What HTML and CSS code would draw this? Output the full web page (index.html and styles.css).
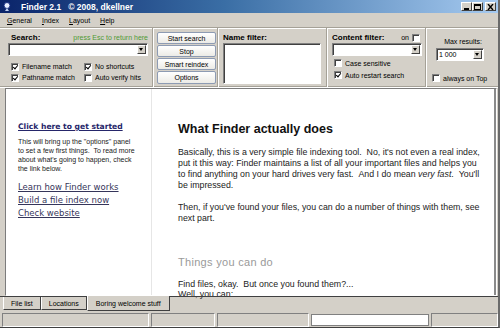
FILE: index.html
```html
<!DOCTYPE html>
<html lang="en">
<head>
    <meta charset="UTF-8">
    <title>Finder 2.1</title>
    <link rel="stylesheet" href="styles.css">
</head>
<body>
    <div class="window">
        <div class="titlebar">
            <svg class="app-icon" width="9" height="10" viewBox="0 0 9 10">
                <circle cx="4" cy="3.5" r="3" fill="#e8f0ff" stroke="#1a2f80" stroke-width="1"/>
                <path d="M2 9 L4 6 L6 9 Z" fill="#c0d0f0"/>
            </svg>
            <span class="title">Finder 2.1 &nbsp; © 2008, dkellner</span>
            <div class="win-buttons">
                <span class="win-btn"><svg width="7" height="6" viewBox="0 0 7 6"><rect x="1" y="4" width="5" height="2" fill="#000"/></svg></span>
                <span class="win-btn"><svg width="7" height="6" viewBox="0 0 7 6"><rect x="0.5" y="0.5" width="6" height="5" fill="none" stroke="#000"/><rect x="0" y="0" width="7" height="2" fill="#000"/></svg></span>
                <span class="win-btn close"><svg width="7" height="6" viewBox="0 0 7 6"><path d="M1 0 L6 6 M6 0 L1 6" stroke="#000" stroke-width="1.4"/></svg></span>
            </div>
        </div>

        <div class="menubar">
            <span><u>G</u>eneral</span>
            <span><u>I</u>ndex</span>
            <span><u>L</u>ayout</span>
            <span><u>H</u>elp</span>
        </div>

        <div class="toolbar">
            <div class="panel search-panel">
                <div class="label-row">
                    <span class="label">Search:</span>
                    <span class="hint">press Esc to return here</span>
                </div>
                <div class="combo search-combo"><span class="combo-text"></span><span class="drop"></span></div>
                <div class="check-grid">
                    <label class="check checked"><span class="box"></span>Filename match</label>
                    <label class="check checked"><span class="box"></span>No shortcuts</label>
                    <label class="check checked"><span class="box"></span>Pathname match</label>
                    <label class="check"><span class="box"></span>Auto verify hits</label>
                </div>
            </div>

            <div class="panel button-panel">
                <button class="btn">Start search</button>
                <button class="btn">Stop</button>
                <button class="btn">Smart reindex</button>
                <button class="btn">Options</button>
            </div>

            <div class="panel name-panel">
                <div class="label-row">
                    <span class="label">Name filter:</span>
                </div>
                <div class="textbox"></div>
            </div>

            <div class="panel content-panel">
                <div class="label-row">
                    <span class="label">Content filter:</span>
                    <label class="check on-check">on<span class="box"></span></label>
                </div>
                <div class="combo content-combo"><span class="combo-text"></span><span class="drop"></span></div>
                <div class="check-list">
                    <label class="check"><span class="box"></span>Case sensitive</label>
                    <label class="check checked"><span class="box"></span>Auto restart search</label>
                </div>
            </div>

            <div class="panel max-panel">
                <div class="max-label">Max results:</div>
                <div class="combo max-combo"><span class="combo-text">1 000</span><span class="drop"></span></div>
                <label class="check top-check"><span class="box"></span>always on Top</label>
            </div>
        </div>

        <div class="viewer">
            <div class="sidebar">
                <a class="start-link">Click here to get started</a>
                <p class="side-text">This will bring up the "options" panel<br>to set a few first things. &nbsp;To read more<br>about what's going to happen, check<br>the link below.</p>
                <div class="side-links">
                    <a>Learn how Finder works</a>
                    <a>Build a file index now</a>
                    <a>Check website</a>
                </div>
            </div>
            <div class="article">
                <h2>What Finder actually does</h2>
                <p>Basically, this is a very simple file indexing tool. &nbsp;No, it's not even a real index,<br>put it this way: Finder maintains a list of all your important files and helps you<br>to find anything on your hard drives very fast. &nbsp;And I do mean <em>very fast</em>. &nbsp;You'll<br>be impressed.</p>
                <p>Then, if you've found your files, you can do a number of things with them, see<br>next part.</p>
                <h3>Things you can do</h3>
                <p class="tight">Find files, okay. &nbsp;But once you found them?...<br>Well, you can:</p>
            </div>
        </div>

        <div class="tabs">
            <span class="tab">File list</span>
            <span class="tab">Locations</span>
            <span class="tab active">Boring welcome stuff</span>
        </div>

        <div class="statusbar">
            <span class="status s1"></span>
            <span class="status s2"></span>
            <span class="status s3"></span>
            <span class="status s4 white"></span>
            <span class="status s5"></span>
        </div>
    </div>
</body>
</html>
```

FILE: styles.css
```css
* {
    box-sizing: border-box;
}
body {
    margin: 0;
    width: 500px;
    height: 328px;
    overflow: hidden;
    background-color: #d4d0c8;
    font-family: 'Liberation Sans', Arial, sans-serif;
    font-size: 7px;
    color: #000;
}
.window {
    width: 500px;
    height: 328px;
    border-right: 2px solid #6a6a6a;
    border-bottom: 1px solid #404040;
    display: flex;
    flex-direction: column;
}

/* title bar */
.titlebar {
    height: 13px;
    flex-shrink: 0;
    display: flex;
    align-items: center;
    padding-left: 3px;
    background: linear-gradient(to right, #0a246a 0%, #3a6ea5 45%, #a6caf0 100%);
}
.app-icon {
    margin-right: 9px;
}
.title {
    color: #fff;
    font-weight: bold;
    font-size: 8.5px;
    white-space: pre;
}
.win-buttons {
    margin-left: auto;
    margin-right: 2px;
    display: flex;
}
.win-btn {
    width: 11px;
    height: 9px;
    background-color: #d4d0c8;
    border: 1px solid;
    border-color: #fff #404040 #404040 #fff;
    display: flex;
    align-items: center;
    justify-content: center;
}
.win-btn.close {
    margin-left: 2px;
}

/* menu */
.menubar {
    height: 14px;
    flex-shrink: 0;
    display: flex;
    align-items: center;
    padding-left: 7px;
}
.menubar span {
    margin-right: 10px;
}

/* toolbar */
.toolbar {
    height: 61px;
    flex-shrink: 0;
    display: flex;
    border-top: 1px solid #a5a197;
    border-bottom: 1px solid #fff;
    box-shadow: inset 0 1px 0 #fff, inset 0 -1px 0 #a5a197;
}
.panel {
    padding-top: 4px;
}
.panel + .panel {
    border-left: 1px solid #a5a197;
    box-shadow: inset 1px 0 0 #fff;
}
.search-panel {
    width: 152px;
    padding-left: 8px;
}
.button-panel {
    width: 65px;
    padding-left: 4px;
    display: flex;
    flex-direction: column;
    gap: 1px;
}
.name-panel {
    width: 109px;
    padding-left: 5px;
}
.content-panel {
    width: 99px;
    padding-left: 5px;
}
.max-panel {
    flex: 1;
    padding-left: 6px;
    padding-top: 10px;
}
.label-row {
    height: 11px;
    display: flex;
    align-items: center;
    justify-content: space-between;
}
.label {
    font-weight: bold;
    font-size: 8px;
}
.search-panel .label {
    margin-left: 3px;
}
.hint {
    color: #4f9a35;
    margin-right: 4px;
}

/* combo boxes and fields */
.combo {
    height: 13px;
    background-color: #fff;
    border: 1px solid;
    border-color: #808080 #fff #fff #808080;
    box-shadow: inset 1px 1px 0 #404040;
    display: flex;
    align-items: center;
    padding: 1px 1px 1px 2px;
}
.combo-text {
    flex: 1;
}
.drop {
    width: 9px;
    height: 9px;
    background-color: #d4d0c8;
    border: 1px solid;
    border-color: #fff #404040 #404040 #fff;
    position: relative;
}
.drop::after {
    content: "";
    position: absolute;
    left: 1px;
    top: 2px;
    border-left: 2.5px solid transparent;
    border-right: 2.5px solid transparent;
    border-top: 3px solid #000;
}
.search-combo {
    width: 140px;
}
.content-combo {
    width: 90px;
}
.max-combo {
    width: 48px;
    margin-left: 4px;
}
.textbox {
    width: 98px;
    height: 41px;
    background-color: #fff;
    border: 1px solid;
    border-color: #808080 #fff #fff #808080;
    box-shadow: inset 1px 1px 0 #404040;
}

/* checkboxes */
.check {
    display: flex;
    align-items: center;
    white-space: nowrap;
}
.box {
    width: 8px;
    height: 8px;
    margin-right: 3px;
    background-color: #fff;
    border: 1px solid;
    border-color: #808080 #fff #fff #808080;
    box-shadow: inset 1px 1px 0 #404040;
    position: relative;
}
.check.checked .box::after {
    content: "";
    position: absolute;
    left: 2px;
    top: 0px;
    width: 2px;
    height: 4px;
    border-right: 1.5px solid #000;
    border-bottom: 1.5px solid #000;
    transform: rotate(40deg);
}
.check-grid {
    margin-top: 5px;
    display: grid;
    grid-template-columns: 73px auto;
    grid-auto-rows: 11px;
    padding-left: 3px;
}
.check-list {
    padding-left: 2px;
    margin-top: 1px;
}
.check-list .check {
    height: 12px;
}
.on-check {
    margin-right: 5px;
}
.on-check .box {
    margin-left: 3px;
    margin-right: 0;
}
.max-label {
    height: 10px;
    text-align: center;
    padding-right: 4px;
}
.top-check {
    margin-top: 12px;
    height: 10px;
}

/* buttons */
.btn {
    width: 59px;
    height: 12px;
    padding: 0;
    font-family: inherit;
    font-size: 7px;
    color: #000;
    background: linear-gradient(#ffffff, #ecebe6);
    border: 1px solid #8d9bb3;
    border-radius: 2px;
}
.btn:last-child {
    height: 13px;
}

/* welcome viewer */
.viewer {
    height: 208px;
    flex-shrink: 0;
    margin-left: 5px;
    margin-right: 1px;
    display: flex;
    background-color: #fff;
    border: 1px solid;
    border-color: #7c7c7c #fff #fff #7c7c7c;
    box-shadow: inset -2px 0 0 #8a8a8a;
}
.sidebar {
    width: 146px;
    border-right: 1px solid #e6e6e6;
    padding: 33px 0 0 12px;
}
.start-link {
    display: block;
    font-family: 'DejaVu Sans', Verdana, sans-serif;
    font-weight: bold;
    font-size: 7.6px;
    line-height: 10px;
    color: #26266a;
    text-decoration: underline;
}
.side-text {
    margin: 5px 0 0;
    line-height: 9px;
    color: #222;
}
.side-links {
    margin-top: 8px;
    display: flex;
    flex-direction: column;
}
.side-links a {
    font-family: 'DejaVu Sans', Verdana, sans-serif;
    font-size: 8.5px;
    line-height: 13px;
    color: #35355a;
    text-decoration: underline;
}
.article {
    flex: 1;
    padding: 33px 0 0 26px;
    color: #222;
}
.article h2 {
    margin: 0;
    font-size: 12.5px;
    line-height: 14px;
    color: #111;
}
.article p {
    margin: 11px 0 0;
    font-size: 8.8px;
    line-height: 11px;
}
.article h3 {
    margin: 32px 0 0;
    font-weight: normal;
    font-size: 11px;
    line-height: 13px;
    color: #9a9a9a;
    letter-spacing: 0.3px;
}
.article p.tight {
    margin-top: 10px;
    line-height: 10px;
}

/* bottom tabs */
.tabs {
    height: 15px;
    flex-shrink: 0;
    display: flex;
    align-items: flex-start;
    padding-left: 3px;
    border-top: 1px solid #404040;
}
.tab {
    height: 13px;
    padding: 0 7px;
    display: flex;
    align-items: center;
    border: 1px solid;
    border-top: none;
    border-color: #fff #404040 #404040 #fff;
}
.tab.active {
    height: 15px;
    margin-top: -1px;
    padding: 0 8px;
    background-color: #d4d0c8;
}

/* status bar */
.statusbar {
    margin-top: 2px;
    height: 14px;
    flex-shrink: 0;
    display: flex;
    gap: 2px;
    padding-left: 2px;
}
.status {
    border: 1px solid;
    border-color: #808080 #fff #fff #808080;
}
.s1 { width: 147px; }
.s2 { width: 64px; }
.s3 { width: 92px; }
.s4 { width: 118px; }
.s5 { flex: 1; }
.status.white {
    background-color: #fff;
    margin: 1px 0;
    border-color: #808080;
}
```
